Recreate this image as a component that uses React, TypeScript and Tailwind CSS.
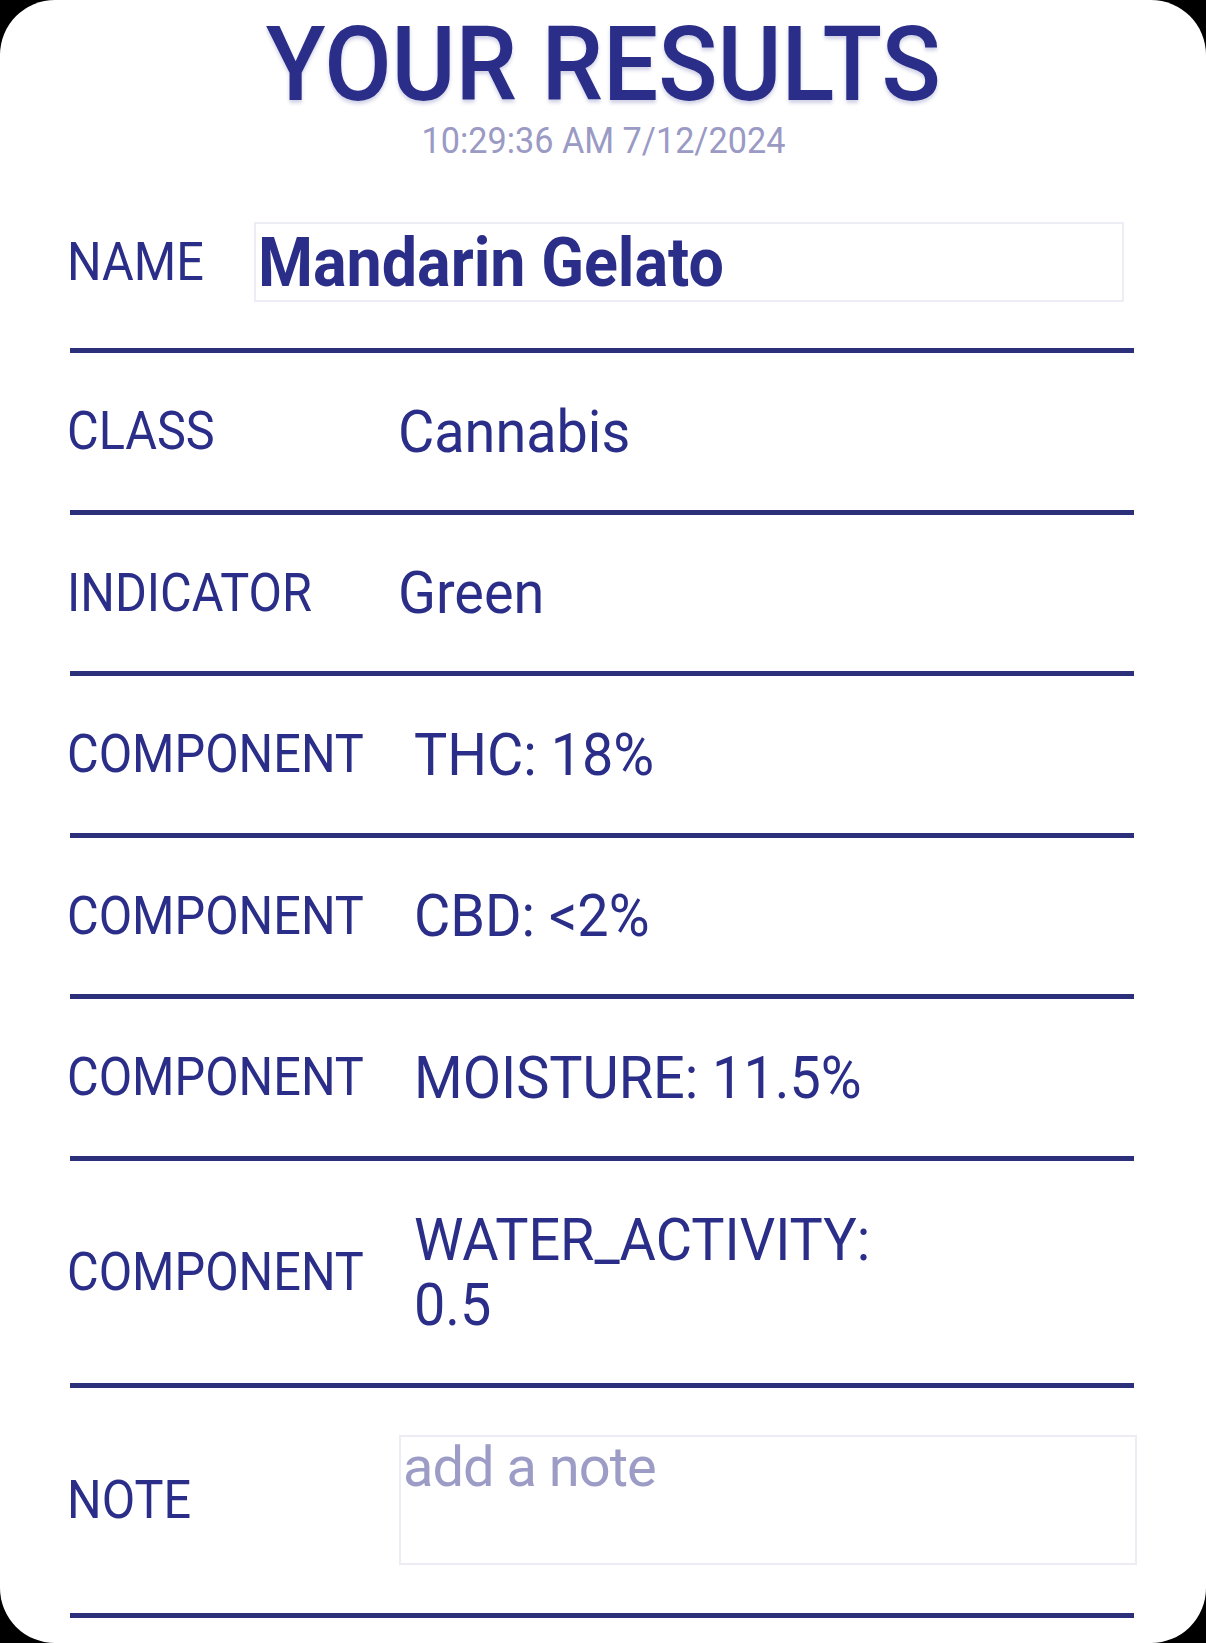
import React from 'react'

const rows = [
  { label: 'CLASS', value: 'Cannabis', wide: false },
  { label: 'INDICATOR', value: 'Green', wide: false },
  { label: 'COMPONENT', value: 'THC: 18%', wide: true },
  { label: 'COMPONENT', value: 'CBD: <2%', wide: true },
  { label: 'COMPONENT', value: 'MOISTURE: 11.5%', wide: true },
]

function Divider() {
  return <div className="ml-[70px] mr-[72px] h-[5px] bg-[#2c2f7a]" />
}

function Label({ children }: { children: React.ReactNode }) {
  return (
    <span className="inline-block origin-left scale-x-[0.9] text-[54px] leading-none text-[#2a2e88]">
      {children}
    </span>
  )
}

export default function App() {
  return (
    <div className="min-h-screen bg-black font-['Roboto',sans-serif]">
      <div className="h-[1643px] rounded-[55px] bg-white overflow-hidden">
        {/* Header */}
        <div className="pt-[19px] text-center">
          <h1 className="inline-block scale-x-[0.95] text-[103px] font-medium leading-[92px] text-[#2a2e88] [text-shadow:0_3px_4px_rgba(42,46,136,0.22)]">
            YOUR RESULTS
          </h1>
          <p className="mt-[12px] text-[36px] leading-[36px] text-[#9a9ac4]">
            <span className="inline-block scale-x-[0.95]">10:29:36 AM 7/12/2024</span>
          </p>
        </div>

        {/* Name */}
        <div className="mt-[63px] flex items-center pl-[67px] pb-[46px]">
          <span className="w-[187px] shrink-0">
            <Label>NAME</Label>
          </span>
          <div className="flex h-[80px] w-[870px] items-center border-2 border-[#ededf5] pl-[2px]">
            <span className="inline-block origin-left scale-x-[0.91] text-[69px] font-bold leading-none text-[#2a2e88]">
              Mandarin Gelato
            </span>
          </div>
        </div>
        <Divider />

        {rows.map((r, i) => (
          <React.Fragment key={i}>
            <div className="flex h-[156.5px] items-center pl-[67px]">
              <span className={`shrink-0 ${r.wide ? 'w-[347px]' : 'w-[331px]'}`}>
                <Label>{r.label}</Label>
              </span>
              <span className="inline-block origin-left scale-x-[0.945] text-[59px] leading-[65px] text-[#2a2e88]">
                {r.value}
              </span>
            </div>
            <Divider />
          </React.Fragment>
        ))}

        {/* Water activity */}
        <div className="flex h-[222px] items-center pl-[67px]">
          <span className="w-[347px] shrink-0">
            <Label>COMPONENT</Label>
          </span>
          <span className="inline-block w-[560px] origin-left scale-x-[0.945] text-[59px] leading-[65px] text-[#2a2e88]">
            WATER_ACTIVITY: 0.5
          </span>
        </div>
        <Divider />

        {/* Note */}
        <div className="flex h-[225px] items-center pl-[67px]">
          <span className="w-[332px] shrink-0">
            <Label>NOTE</Label>
          </span>
          <textarea
            placeholder="add a note"
            className="h-[130px] w-[738px] resize-none border-2 border-[#ececf5] pl-[2px] pt-[2px] text-[56px] leading-none tracking-[-1px] text-[#2a2e88] outline-none placeholder:text-[#9c9cc6]"
          />
        </div>
        <Divider />
      </div>
    </div>
  )
}
